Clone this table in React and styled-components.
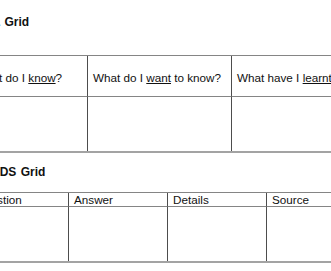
import styled, { createGlobalStyle } from "styled-components"

const GlobalStyle = createGlobalStyle`
  html, body {
    margin: 0;
    padding: 0;
    background: #ffffff;
    overflow: hidden;
  }
  body {
    font-family: "Liberation Sans", Arial, sans-serif;
    color: #111111;
  }
`

const Page = styled.div`
  margin-left: -31px;
  width: 420px;
  display: flex;
  flex-direction: column;
`

const Title = styled.div`
  font-size: 12px;
  line-height: 14px;
  font-weight: bold;
  padding-left: 4px;
  margin-top: ${(p) => p.$top}px;
  word-spacing: 1px;
`

const Grid = styled.div`
  display: grid;
  grid-template-columns: ${(p) => p.$cols};
  border-top: 1px solid #858585;
  border-bottom: 2px solid #a3a3a3;
  margin-top: ${(p) => p.$top}px;
`

const Cell = styled.div`
  font-size: 11.7px;
  line-height: ${(p) => (p.$head ? "13px" : "14px")};
  height: ${(p) => p.$height}px;
  padding: ${(p) => p.$padTop}px 0 0 5px;
  box-sizing: border-box;
  border-left: 1px solid #4d4d4d;
  border-bottom: ${(p) => (p.$head ? "1px solid #858585" : "none")};
  white-space: nowrap;
  overflow: hidden;
`

const U = styled.span`
  text-decoration: underline;
`

const kwl = [
  <>What do I <U>know</U>?</>,
  <>What do I <U>want</U> to know?</>,
  <>What have I <U>learnt</U>?</>,
]

const quads = ["Question", "Answer", "Details", "Source"]

const App = () => {
  return (
    <>
      <GlobalStyle />
      <Page>
        <Title $top={15}>KWL Grid</Title>
        <Grid $cols="118px 144px 158px" $top={26}>
          {kwl.map((h, i) => (
            <Cell key={"h" + i} $head $height={41} $padTop={15}>
              {h}
            </Cell>
          ))}
          {kwl.map((_, i) => (
            <Cell key={"b" + i} $height={54} $padTop={0} />
          ))}
        </Grid>
        <Title $top={12}>QUADS Grid</Title>
        <Grid $cols="99px 99px 99px 99px" $top={13}>
          {quads.map((q) => (
            <Cell key={q} $head $height={14} $padTop={0}>
              {q}
            </Cell>
          ))}
          {quads.map((q) => (
            <Cell key={"b" + q} $height={54} $padTop={0} />
          ))}
        </Grid>
      </Page>
    </>
  )
}

export default App
